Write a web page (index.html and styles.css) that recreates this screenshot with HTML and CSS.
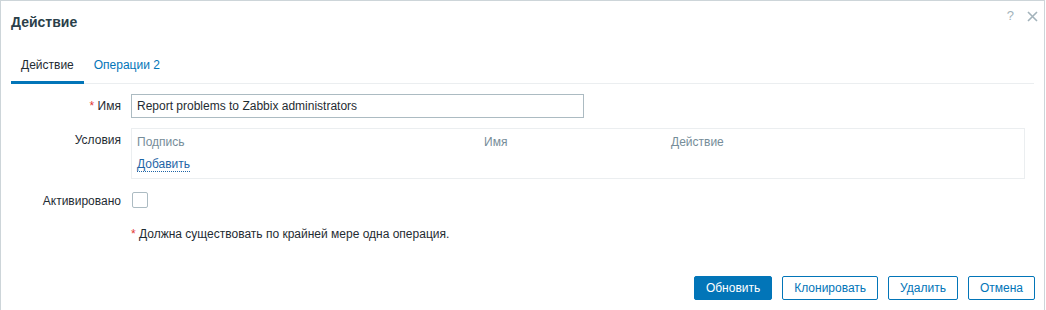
FILE: index.html
```html
<!DOCTYPE html>
<html lang="ru">
<head>
    <meta charset="UTF-8">
    <title>Действие</title>
    <link rel="stylesheet" href="styles.css">
</head>
<body>
    <div class="dialog">
        <div class="dialog-header">
            <h4>Действие</h4>
            <div class="header-controls">
                <span class="btn-help">?</span>
                <span class="btn-close">
                    <svg width="11" height="11" viewBox="0 0 11 11"><path d="M1 1L10 10M10 1L1 10" stroke="#a3b3bb" stroke-width="1.6" fill="none"/></svg>
                </span>
            </div>
        </div>

        <div class="dialog-body">
            <ul class="tabs">
                <li class="tab active">Действие</li>
                <li class="tab">Операции <span class="count">2</span></li>
            </ul>

            <div class="form-list">
                <div class="form-row">
                    <label class="form-label"><span class="asterisk">*</span> Имя</label>
                    <div class="form-field">
                        <input type="text" class="text-input" value="Report problems to Zabbix administrators">
                    </div>
                </div>

                <div class="form-row">
                    <label class="form-label label-top">Условия</label>
                    <div class="form-field">
                        <div class="conditions">
                            <div class="cond-head">
                                <span>Подпись</span>
                                <span>Имя</span>
                                <span>Действие</span>
                            </div>
                            <div class="cond-add">
                                <a class="link-action">Добавить</a>
                            </div>
                        </div>
                    </div>
                </div>

                <div class="form-row">
                    <label class="form-label">Активировано</label>
                    <div class="form-field">
                        <span class="checkbox"></span>
                    </div>
                </div>

                <div class="form-row">
                    <div class="form-label"></div>
                    <div class="form-field note"><span class="asterisk">*</span> Должна существовать по крайней мере одна операция.</div>
                </div>
            </div>
        </div>

        <div class="dialog-footer">
            <button class="btn primary">Обновить</button>
            <button class="btn">Клонировать</button>
            <button class="btn">Удалить</button>
            <button class="btn">Отмена</button>
        </div>
    </div>
</body>
</html>
```

FILE: styles.css
```css
body {
    margin: 0;
    background: #fff;
    font-family: "Liberation Sans", Arial, sans-serif;
    font-size: 12px;
    color: #1f2c33;
}
.dialog {
    width: 1043px;
    height: 309px;
    border: 1px solid #cdd5d9;
    border-bottom: none;
    display: flex;
    flex-direction: column;
}
.dialog-header {
    display: flex;
    justify-content: space-between;
    align-items: flex-start;
    padding: 10px 6px 0 10px;
}
.dialog-header h4 {
    margin: 0;
    font-size: 14px;
    font-weight: bold;
    line-height: 22px;
    color: #2b3f4a;
}
.header-controls {
    display: flex;
    align-items: center;
    gap: 13px;
    margin-top: -1px;
}
.btn-help {
    color: #a3b3bb;
    font-size: 13px;
    line-height: 12px;
}
.btn-close svg {
    display: block;
}
.dialog-body {
    padding: 0 10px;
}
.tabs {
    list-style: none;
    margin: 25px 0 0 0;
    padding: 0;
    display: flex;
    border-bottom: 1px solid #ebeef0;
}
.tab {
    padding: 0 10px;
    line-height: 14px;
    padding-bottom: 9px;
    color: #0275b8;
    border-bottom: 3px solid transparent;
    margin-bottom: -1px;
}
.tab.active {
    color: #1f2c33;
    border-bottom-color: #0275b8;
}
.form-list {
    padding-top: 10px;
    display: flex;
    flex-direction: column;
    gap: 10px;
}
.form-row {
    display: flex;
    gap: 10px;
}
.form-label {
    width: 110px;
    flex-shrink: 0;
    text-align: right;
    line-height: 24px;
}
.label-top {
    line-height: 14px;
    padding-top: 5px;
}
.asterisk {
    color: #e33734;
}
.text-input {
    box-sizing: border-box;
    width: 453px;
    height: 24px;
    margin: 0;
    padding: 0 5px;
    border: 1px solid #acbbc2;
    font-family: inherit;
    font-size: 12px;
    color: #1f2c33;
    display: block;
}
.conditions {
    width: 894px;
    box-sizing: border-box;
    border: 1px solid #ebeef0;
    padding-bottom: 3px;
}
.cond-head {
    display: grid;
    grid-template-columns: 347px 187px 1fr;
    color: #768d99;
    line-height: 14px;
    padding: 6px 0 5px 0;
}
.cond-head span {
    padding-left: 5px;
}
.cond-add {
    padding: 3px 5px 4px 5px;
    line-height: 14px;
}
.link-action {
    color: #1f65a6;
    border-bottom: 1px dotted #1f65a6;
}
.checkbox {
    display: block;
    box-sizing: border-box;
    width: 16px;
    height: 16px;
    margin: 3px 0 0 1px;
    border: 1px solid #acbbc2;
    border-radius: 2px;
}
.note {
    line-height: 22px;
}
.dialog-footer {
    margin-top: auto;
    margin-bottom: 10px;
    display: flex;
    justify-content: flex-end;
    gap: 10px;
    padding: 0 9px 0 10px;
}
.btn {
    height: 24px;
    padding: 0 11px;
    border: 1px solid #0275b8;
    border-radius: 2px;
    background: #fff;
    color: #0275b8;
    font-family: inherit;
    font-size: 12px;
    cursor: pointer;
}
.btn.primary {
    background: #0275b8;
    color: #fff;
}
```
